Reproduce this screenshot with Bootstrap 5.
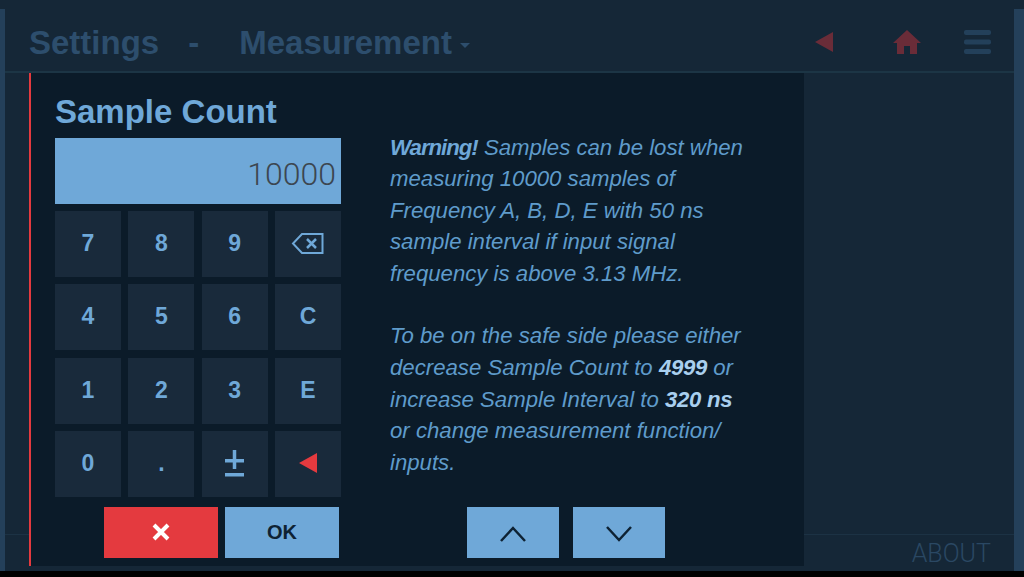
<!DOCTYPE html>
<html lang="en">
<head>
  <meta charset="UTF-8" />
  <title>Sample Count</title>
  <link href="https://cdn.jsdelivr.net/npm/bootstrap@5.3.2/dist/css/bootstrap.min.css" rel="stylesheet">
  <style>
    html, body { height: 577px; overflow: hidden; background: #000; }
    body { font-family: "Liberation Sans", Arial, sans-serif; }
    .app-shell { height: 571px; position: relative; background: #152737; }
    .side-bar { width: 5px; margin-top: 9px; background: #24405a; }
    .side-bar-right { width: 10px; }
    .top-bar { height: 73px; border-bottom: 2px solid #1c3545; color: #2d4e6d; padding: 12px 23px 0 24px; }
    .top-heading { margin-top: 2px; }
    .top-title { font-size: 33px; font-weight: 700; line-height: 1; }
    .title-dash { margin: 0 40px 0 29px; }
    .title-caret { width: 0; height: 0; margin: 5px 0 0 8px; border-left: 5px solid transparent; border-right: 5px solid transparent; border-top: 5px solid #2d4e6d; }
    .icon-back { margin-right: 59px; }
    .icon-home { margin-right: 43px; }
    .bottom-bar { height: 37px; border-top: 1px solid #1c3244; padding: 2px 23px 0 0; color: #2a4863; font-family: Roboto, "Liberation Sans", sans-serif; font-size: 25px; font-weight: 300; }
    .dialog-box { position: absolute; left: 29px; top: 73px; width: 775px; height: 493px; background: #0b1b29; border-left: 2px solid #e43a3f; padding: 20px 0 0 24px; }
    .dialog-title { font-size: 33px; font-weight: 700; line-height: 38px; color: #6fa8d8; margin: 0 0 7px; }
    .left-col { width: 286px; }
    .num-display { height: 66px; background: #6fa8d8; color: #3c4650; font-family: Roboto, "Liberation Sans", sans-serif; font-size: 32px; font-weight: 300; line-height: 72px; text-align: right; padding-right: 5px; }
    .key-grid { display: grid; grid-template-columns: repeat(4, 1fr); grid-auto-rows: 66px; column-gap: 7.3px; row-gap: 7.4px; margin-top: 7px; }
    .key-btn { background: #192a3b; color: #6fa8d8; font-size: 23px; font-weight: 700; border: 0; border-radius: 0; padding: 0 0 2px; }
    .action-row { gap: 7px; margin-top: 9.8px; padding-left: 49px; }
    .action-btn { width: 114px; height: 51px; border: 0; border-radius: 0; padding: 0; font-size: 20px; font-weight: 700; }
    .btn-cancel { background: #e43a3f; color: #fff; }
    .btn-ok { background: #6fa8d8; color: #0e2233; }
    .warn-col { width: 365px; margin-left: 49px; padding-top: 38.5px; color: #5f9bcb; font-size: 22.2px; font-style: italic; line-height: 31.6px; }
    .warn-col p { margin: 0 0 31px; }
    .warn-col b { color: #6fa8d8; letter-spacing: -1px; }
    .warn-col b.hl { color: #a9cfee; letter-spacing: -.3px; }
    .pager-row { gap: 14px; margin-top: 29px; padding-left: 77px; }
    .pager-btn { width: 92px; height: 51px; background: #6fa8d8; border: 0; border-radius: 0; padding: 0; }
  </style>
</head>
<body>
  <div class="app-shell d-flex">
    <div class="side-bar"></div>
    <div class="flex-grow-1 d-flex flex-column">
      <div class="top-bar d-flex align-items-center justify-content-between">
        <div class="d-flex align-items-center top-heading">
          <span class="top-title">Settings</span>
          <span class="top-title title-dash">-</span>
          <span class="top-title">Measurement</span>
          <span class="title-caret"></span>
        </div>
        <div class="d-flex align-items-center">
          <svg class="icon-back" width="20" height="22" viewBox="0 0 20 22"><path d="M1 11 19 1V21Z" fill="#6a2c38"/></svg>
          <svg class="icon-home" width="28" height="24" viewBox="0 0 28 24"><path d="M14 0 28 13H24V24H17V16H11V24H4V13H0Z" fill="#6a2c38"/></svg>
          <svg width="27" height="24" viewBox="0 0 27 24" fill="#23405a"><rect width="27" height="5" rx="2"/><rect y="9.500" width="27" height="5" rx="2"/><rect y="19" width="27" height="5" rx="2"/></svg>
        </div>
      </div>
      <div class="flex-grow-1"></div>
      <div class="bottom-bar d-flex align-items-center justify-content-end">ABOUT</div>
    </div>
    <div class="side-bar side-bar-right"></div>

    <div class="dialog-box d-flex">
      <div class="left-col">
        <h2 class="dialog-title">Sample Count</h2>
        <div class="num-display">10000</div>
        <div class="key-grid">
          <button class="btn key-btn">7</button>
          <button class="btn key-btn">8</button>
          <button class="btn key-btn">9</button>
          <button class="btn key-btn d-flex align-items-center justify-content-center">
            <svg width="33" height="23" viewBox="0 0 33 23" fill="none" stroke="#6fa8d8" stroke-width="2"><path d="M11 2H31.500V21H11L2 11.500Z"/><path d="M16 7 25 16M25 7 16 16" stroke-width="2.500"/></svg>
          </button>
          <button class="btn key-btn">4</button>
          <button class="btn key-btn">5</button>
          <button class="btn key-btn">6</button>
          <button class="btn key-btn">C</button>
          <button class="btn key-btn">1</button>
          <button class="btn key-btn">2</button>
          <button class="btn key-btn">3</button>
          <button class="btn key-btn">E</button>
          <button class="btn key-btn">0</button>
          <button class="btn key-btn">.</button>
          <button class="btn key-btn d-flex align-items-center justify-content-center">
            <svg width="19" height="27" viewBox="0 0 19 27" fill="#6fa8d8"><rect y="9" width="19" height="3.500"/><rect x="7.750" width="3.500" height="19"/><rect y="23" width="19" height="3.500"/></svg>
          </button>
          <button class="btn key-btn d-flex align-items-center justify-content-center">
            <svg width="18" height="20" viewBox="0 0 18 20"><path d="M0 10 18 0V20Z" fill="#e43a3f"/></svg>
          </button>
        </div>
        <div class="d-flex action-row">
          <button class="btn action-btn btn-cancel d-flex align-items-center justify-content-center">
            <svg width="18" height="18" viewBox="0 0 18 18" stroke="#fff" stroke-width="4"><path d="M2 2 16 16M16 2 2 16"/></svg>
          </button>
          <button class="btn action-btn btn-ok">OK</button>
        </div>
      </div>
      <div class="warn-col">
        <p><b>Warning!</b> Samples can be lost when measuring 10000 samples of Frequency A, B, D, E with 50 ns sample interval if input signal frequency is above 3.13 MHz.</p>
        <p class="mb-0">To be on the safe side please either decrease Sample Count to <b class="hl">4999</b> or increase Sample Interval to <b class="hl">320 ns</b> or change measurement function/ inputs.</p>
        <div class="d-flex pager-row">
          <button class="btn pager-btn">
            <svg width="26" height="16" viewBox="0 0 26 16" fill="none" stroke="#0e2233" stroke-width="2.500"><path d="M1 15 13 2 25 15"/></svg>
          </button>
          <button class="btn pager-btn">
            <svg width="26" height="16" viewBox="0 0 26 16" fill="none" stroke="#0e2233" stroke-width="2.500"><path d="M1 1 13 14 25 1"/></svg>
          </button>
        </div>
      </div>
    </div>
  </div>
  <script src="https://cdn.jsdelivr.net/npm/bootstrap@5.3.2/dist/js/bootstrap.bundle.min.js"></script>
</body>
</html>
